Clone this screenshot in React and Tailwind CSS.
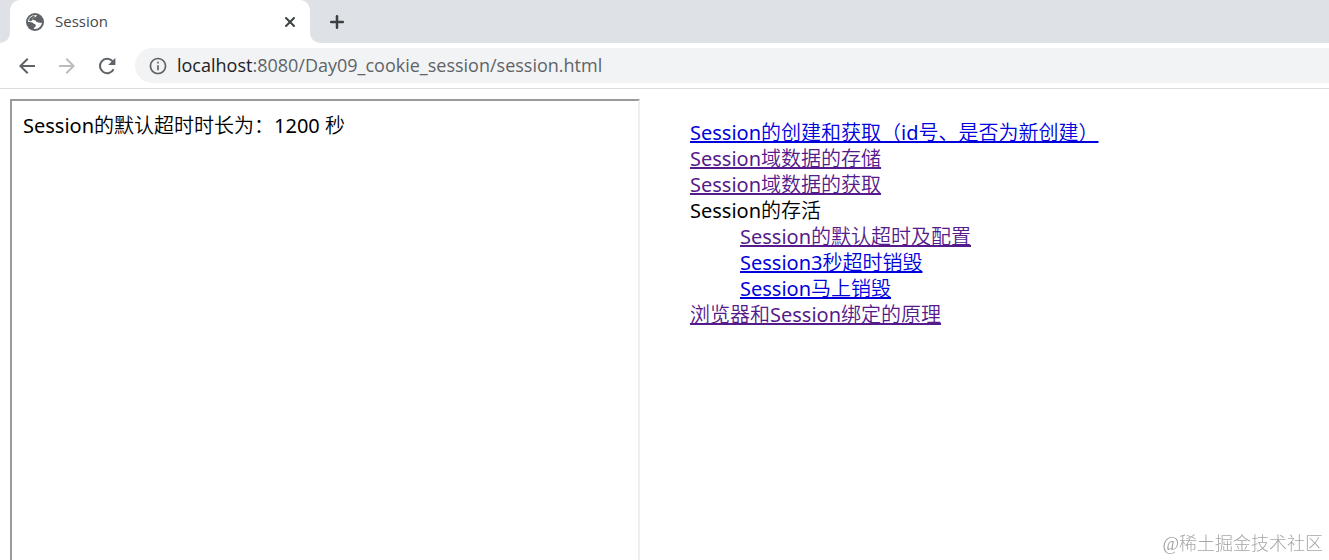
import { X, Plus } from 'lucide-react';
import { MdArrowBack, MdArrowForward, MdInfoOutline } from 'react-icons/md';

const links = [
  { text: 'Session的创建和获取（id号、是否为新创建）' },
  { text: 'Session域数据的存储', visited: true },
  { text: 'Session域数据的获取', visited: true },
  {
    text: 'Session的存活',
    children: [
      { text: 'Session的默认超时及配置', visited: true },
      { text: 'Session3秒超时销毁' },
      { text: 'Session马上销毁' },
    ],
  },
  { text: '浏览器和Session绑定的原理', visited: true },
];

function LinkList({ items, nested }) {
  return (
    <ul className={nested ? 'pl-[50px]' : ''}>
      {items.map(item => (
        <li key={item.text}>
          {item.children ? (
            <>
              {item.text}
              <LinkList items={item.children} nested />
            </>
          ) : (
            <a
              href="#"
              className={`underline decoration-2 underline-offset-1 ${item.visited ? 'text-[#551a8b]' : 'text-[#0000dd]'}`}
            >
              {item.text}
            </a>
          )}
        </li>
      ))}
    </ul>
  );
}

function GlobeIcon() {
  return (
    <svg className="size-[18px]" viewBox="0 0 18 18" fill="none">
      <circle cx="9" cy="9" r="9" fill="#5f6368" />
      <path
        d="M10.8 2.2C10.6 3.6 9.6 4 8.2 4.2 7.6 5.2 6.6 5.4 6.6 6.4 7.4 7.4 9.4 6.8 10 8 10.4 9.2 11.2 9.4 12.6 9.4 13.8 9.4 14.6 10.4 15.9 9.6 15.6 13.2 12.8 16 9 16 8.6 16 8.2 15.9 7.8 15.8 8 14.4 9.8 14.4 9.8 12.6 9.8 11.4 8.8 11 7.8 10.8 6.8 9.2 4.6 9 2.1 9 2 5 5.2 2 9 2Z"
        fill="#fff"
      />
      <path d="M3.6 5.2 7.6 2.6 9.2 2.8 8 4.2 6.6 5.4 6.6 7 4.8 8.2 3 8Z" fill="#5f6368" />
    </svg>
  );
}

function ReloadIcon() {
  return (
    <svg className="size-6" viewBox="0 0 24 24" fill="none">
      <path d="M18.6 15.2A7.2 7.2 0 1 1 17.4 7" stroke="#5f6368" strokeWidth="2" />
      <path d="M20.4 3.8V11H13.2Z" fill="#5f6368" />
    </svg>
  );
}

function TabBar() {
  return (
    <div className="flex h-[43px] items-end bg-[#dee1e6]">
      <div className="h-full w-[10px] bg-white">
        <div className="h-full rounded-br-[10px] bg-[#dee1e6]" />
      </div>
      <div className="h-full w-[300px] bg-[#dee1e6]">
        <div className="flex h-full items-center rounded-t-[10px] bg-white pr-3 pl-4">
          <GlobeIcon />
          <span className="ml-[11px] flex-1 font-['Open_Sans',sans-serif] text-[15px] text-[#45494d]">Session</span>
          <button aria-label="Close tab">
            <X className="size-4 text-[#3c4043]" strokeWidth={3} />
          </button>
        </div>
      </div>
      <div className="h-full w-[10px] bg-white">
        <div className="h-full rounded-bl-[10px] bg-[#dee1e6]" />
      </div>
      <button aria-label="New tab" className="ml-[7px] self-center">
        <Plus className="size-5 text-[#3c4043]" strokeWidth={3} />
      </button>
    </div>
  );
}

function Toolbar() {
  return (
    <div className="flex h-[46px] items-center border-b border-[#d9dbde] bg-white pl-[15px]">
      <button aria-label="Back">
        <MdArrowBack className="size-6 text-[#5f6368]" />
      </button>
      <button aria-label="Forward" className="ml-4">
        <MdArrowForward className="size-6 text-[#babcbe]" />
      </button>
      <button aria-label="Reload" className="ml-4">
        <ReloadIcon />
      </button>
      <div className="ml-4 flex h-[35px] flex-1 items-center rounded-l-full bg-[#f1f3f4] pl-[13px]">
        <MdInfoOutline className="size-5 text-[#5f6368]" />
        <p className="ml-[9px] font-['Open_Sans',sans-serif] text-[18px] text-[#5f6368]">
          <span className="text-[#202124]">localhost</span>:8080/Day09_cookie_session/session.html
        </p>
      </div>
    </div>
  );
}

function App() {
  return (
    <div className="flex min-h-screen flex-col bg-white font-['Noto_Sans','Noto_Sans_CJK_SC_DemiLight','Noto_Sans_CJK_SC_Light','Noto_Sans_CJK_SC',sans-serif]">
      <TabBar />
      <Toolbar />
      <main className="grid flex-1 grid-cols-[630fr_679fr] px-[10px] pt-[10px] text-[20px] leading-[26px] text-black">
        <section className="border-t-2 border-r-2 border-l-2 border-t-[#9a9a9a] border-r-[#eeeeee] border-l-[#9a9a9a] px-[11px] pt-3">
          Session的默认超时时长为：1200 秒
        </section>
        <nav className="pt-[21px] pl-[50px]">
          <LinkList items={links} />
        </nav>
      </main>
      <div className="fixed right-[6px] bottom-1 font-['Liberation_Serif','Noto_Sans_CJK_SC',serif] text-[18px] leading-6 font-light text-[#a6a6a6]">
        @稀土掘金技术社区
      </div>
    </div>
  );
}

export default App;
